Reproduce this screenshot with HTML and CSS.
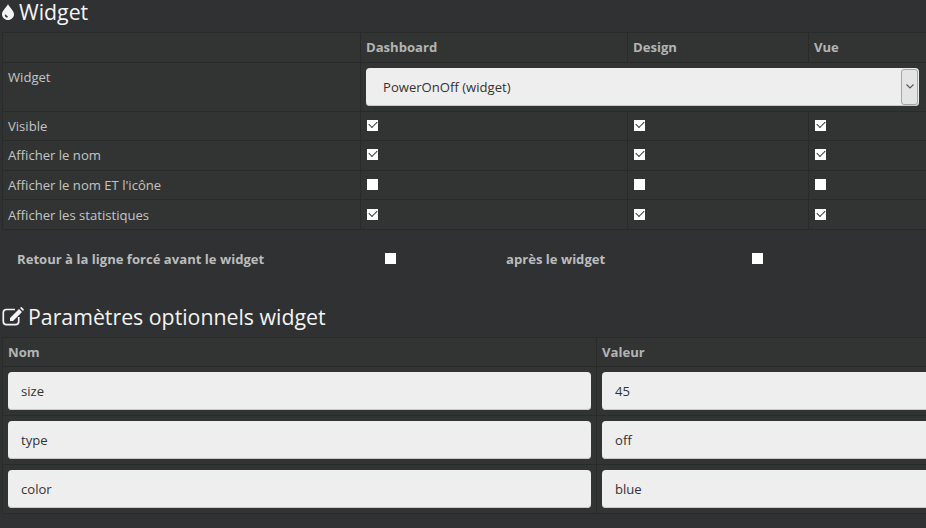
FILE: index.html
```html
<!DOCTYPE html>
<html lang="en">
<head>
    <meta charset="UTF-8">
    <title>Widget</title>
    <link rel="stylesheet" href="styles.css">
</head>
<body>
    <h2 class="title title-first">
        <svg class="icon-drop" viewBox="0 0 12 16"><path fill-rule="evenodd" d="M6 0C7 3 12 6.500 12 10.200 12 13.400 9.300 16 6 16S0 13.400 0 10.200C0 6.500 5 3 6 0ZM3.600 10.500c-.6 0-.9.500-.7 1.200.4 1.100 1.100 1.700 2.100 1.800.6 0 .9-.3.900-.8s-.3-.7-.8-.8c-.4-.1-.6-.4-.8-.8-.1-.4-.3-.6-.7-.6Z" fill="#f4f4f4"/></svg>
        Widget
    </h2>

    <table class="grid grid-widget">
        <thead>
            <tr>
                <th class="col-label"></th>
                <th class="col-dash">Dashboard</th>
                <th class="col-design">Design</th>
                <th>Vue</th>
            </tr>
        </thead>
        <tbody>
            <tr class="row-select">
                <td>Widget</td>
                <td colspan="3">
                    <div class="select">
                        <span class="select-text">PowerOnOff (widget)</span>
                        <span class="select-btn">
                            <svg viewBox="0 0 8 5" width="8" height="5"><path d="M.5.5 4 4 7.500.5" fill="none" stroke="#555" stroke-width="1.100"/></svg>
                        </span>
                    </div>
                </td>
            </tr>
            <tr>
                <td>Visible</td>
                <td><span class="check on"></span></td>
                <td><span class="check on"></span></td>
                <td><span class="check on"></span></td>
            </tr>
            <tr>
                <td>Afficher le nom</td>
                <td><span class="check on"></span></td>
                <td><span class="check on"></span></td>
                <td><span class="check on"></span></td>
            </tr>
            <tr>
                <td>Afficher le nom ET l'icône</td>
                <td><span class="check"></span></td>
                <td><span class="check"></span></td>
                <td><span class="check"></span></td>
            </tr>
            <tr>
                <td>Afficher les statistiques</td>
                <td><span class="check on"></span></td>
                <td><span class="check on"></span></td>
                <td><span class="check on"></span></td>
            </tr>
        </tbody>
    </table>

    <div class="breaks">
        <span class="break-label break-before">Retour à la ligne forcé avant le widget</span>
        <span class="check break-box-first"></span>
        <span class="break-label break-after">après le widget</span>
        <span class="check"></span>
    </div>

    <h2 class="title title-second">
        <svg class="icon-edit" viewBox="0 0 22 19"><path d="M13 2.500H4.500a3.200 3.200 0 0 0-3.200 3.200v8.800a3.200 3.200 0 0 0 3.200 3.200h9a3.200 3.200 0 0 0 3.200-3.200V10" fill="none" stroke="#f4f4f4" stroke-width="1.700"/><path d="M8 11 17 2l3 3-9 9H8ZM18 1l.8-.8c.3-.2.6-.2.9 0l2 2c.2.3.2.6 0 .9L21 4Z" fill="#f4f4f4"/></svg>
        Paramètres optionnels widget
    </h2>

    <table class="grid grid-params">
        <thead>
            <tr>
                <th class="col-name">Nom</th>
                <th>Valeur</th>
            </tr>
        </thead>
        <tbody>
            <tr>
                <td><input class="field" type="text" value="size"></td>
                <td><input class="field" type="text" value="45"></td>
            </tr>
            <tr>
                <td><input class="field" type="text" value="type"></td>
                <td><input class="field" type="text" value="off"></td>
            </tr>
            <tr>
                <td><input class="field" type="text" value="color"></td>
                <td><input class="field" type="text" value="blue"></td>
            </tr>
        </tbody>
    </table>
</body>
</html>
```

FILE: styles.css
```css
html, body {
    height: 100%;
    overflow: hidden;
}

body {
    margin: 0;
    padding: 0 0 0 2px;
    width: 960px;
    background-color: #2f3133;
    color: #c4c4c4;
    font-family: "Open Sans", sans-serif;
    font-size: 13.100px;
}

.title {
    display: flex;
    align-items: center;
    margin: 0;
    color: #f4f4f4;
    font-size: 21.300px;
    font-weight: 400;
    line-height: 24px;
}

.title-first {
    gap: 5px;
    height: 32px;
    padding-bottom: 8px;
    box-sizing: border-box;
}

.title-second {
    gap: 4px;
    height: 30px;
    margin-top: 14px;
    margin-bottom: 5px;
}

.icon-drop {
    width: 12px;
    height: 16px;
    margin-bottom: 1px;
}

.icon-edit {
    width: 22px;
    height: 19px;
}

.grid {
    border-collapse: collapse;
    table-layout: fixed;
}

.grid th, .grid td {
    border: 1px solid #292b2b;
    background-color: #323433;
    padding: 0 5px;
    text-align: left;
    vertical-align: middle;
    line-height: 18px;
}

.grid th {
    color: #b4b4b4;
    font-weight: 700;
}

.grid-widget {
    width: 958px;
}

.grid-widget tr {
    height: 29.600px;
}

.grid-widget .row-select {
    height: 49px;
}

.row-select td:first-child {
    vertical-align: top;
    padding-top: 5px;
}

.col-label {
    width: 347px;
}

.col-dash {
    width: 256px;
}

.col-design {
    width: 170px;
}

.select {
    display: flex;
    align-items: center;
    justify-content: space-between;
    box-sizing: border-box;
    width: 553px;
    height: 38px;
    padding: 0 1px 0 17px;
    border-radius: 4px;
    box-shadow: inset 0 -1px 0 #c8c8c8;
    background-color: #eeeeee;
    color: #333333;
}

.select-btn {
    display: flex;
    align-items: center;
    justify-content: center;
    box-sizing: border-box;
    width: 17px;
    height: 36px;
    border: 1px solid #a4a4a4;
    border-radius: 3px;
    background-color: #e4e4e4;
}

.check {
    display: block;
    width: 11px;
    height: 11px;
    margin: 0 0 1px 1px;
    background-color: #ffffff;
}

.check.on {
    position: relative;
}

.check.on::after {
    content: "";
    position: absolute;
    left: 2px;
    top: 1px;
    width: 7px;
    height: 4px;
    border-left: 1.500px solid #333;
    border-bottom: 1.500px solid #333;
    transform: rotate(-45deg);
}

.breaks {
    display: flex;
    align-items: center;
    height: 58px;
    font-weight: 700;
    color: #bcbcbc;
}

.break-before {
    width: 367px;
    padding-left: 15px;
}

.break-box-first {
    margin-right: 110px;
}

.break-after {
    width: 245px;
}

.grid-params {
    width: 958px;
}

.grid-params thead tr {
    height: 29px;
}

.grid-params tbody tr {
    height: 49px;
}

.col-name {
    width: 583px;
}

.field {
    display: block;
    box-sizing: border-box;
    width: 100%;
    height: 38px;
    padding: 0 13px;
    border: none;
    border-radius: 4px;
    box-shadow: inset 0 -1px 0 #c8c8c8;
    background-color: #eeeeee;
    color: #333333;
    font-family: "Open Sans", sans-serif;
    font-size: 13.100px;
}
```
